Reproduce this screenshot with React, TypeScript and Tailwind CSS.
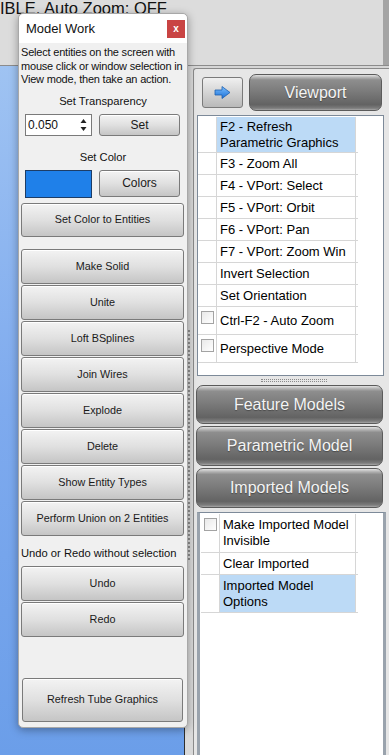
import React from "react";

const grayBtn =
  "flex items-center justify-center rounded-[3px] border border-[#7a7a7a] bg-gradient-to-b from-[#f3f3f3] via-[#e0e0e0] to-[#c5c5c5] text-[10.8px] text-[#1a1a1a] shadow-[inset_0_1px_0_#ffffff]";

const darkBtn =
  "flex items-center justify-center rounded-[7px] border border-[#5b5b5b] bg-[linear-gradient(to_bottom,#e2e2e2_0%,#b4b4b4_7%,#8e8e8e_14%,#7c7c7c_45%,#636363_85%,#7d7d7d_95%,#a8a8a8_100%)] text-[16px] text-[#f4f4f4] [text-shadow:0_1px_1px_rgba(0,0,0,0.35)]";

function Checkbox() {
  return (
    <div className="h-[13px] w-[13px] border border-[#a3a3a3] bg-gradient-to-br from-[#e9e9e9] to-[#ffffff]" />
  );
}

type Row = { text: string[]; h: number; sel?: boolean; check?: boolean };

function ListBox({ rows, first, textW }: { rows: Row[]; first: number; textW: number }) {
  return (
    <div className="flex flex-col pt-[1px]">
      {rows.map((r, i) => (
        <div key={i} className="flex border-b border-[#d6d6d6]" style={{ height: r.h, width: first + textW + 2 }}>
          <div className="flex shrink-0 justify-center border-r border-[#d6d6d6] pt-[4px]" style={{ width: first }}>
            {r.check ? <Checkbox /> : null}
          </div>
          <div
            className={`flex shrink-0 flex-col justify-center border-r border-[#d6d6d6] pl-[3px] text-[13px] leading-[16px] text-black ${
              r.sel ? "bg-[#bcdaf6]" : ""
            }`}
            style={{ width: textW }}
          >
            {r.text.map((t, j) => (
              <div key={j} className="whitespace-nowrap">
                {t}
              </div>
            ))}
          </div>
        </div>
      ))}
    </div>
  );
}

export default function App() {
  const rows1: Row[] = [
    { text: ["F2 - Refresh", "Parametric Graphics"], h: 36, sel: true },
    { text: ["F3 - Zoom All"], h: 22 },
    { text: ["F4 - VPort: Select"], h: 22 },
    { text: ["F5 - VPort: Orbit"], h: 22 },
    { text: ["F6 - VPort: Pan"], h: 22 },
    { text: ["F7 - VPort: Zoom Win"], h: 22 },
    { text: ["Invert Selection"], h: 22 },
    { text: ["Set Orientation"], h: 22 },
    { text: ["Ctrl-F2 - Auto Zoom"], h: 28, check: true },
    { text: ["Perspective Mode"], h: 28, check: true },
  ];
  const rows2: Row[] = [
    { text: ["Make Imported Model", "Invisible"], h: 39, check: true },
    { text: ["Clear Imported"], h: 22 },
    { text: ["Imported Model", "Options"], h: 38, sel: true },
  ];
  const actions = [
    "Make Solid",
    "Unite",
    "Loft BSplines",
    "Join Wires",
    "Explode",
    "Delete",
    "Show Entity Types",
    "Perform Union on 2 Entities",
  ];

  return (
    <div className="relative h-[755px] w-[389px] overflow-hidden bg-[#d6d6d6] font-['Liberation_Sans',Arial,sans-serif]">
      {/* top status bar */}
      <div className="flex h-[66px] border-b border-[#8c8c8c]">
        <div className="flex-1 bg-[#dcdcdc] text-[16.5px] leading-none text-[#111]">IBLE, Auto Zoom: OFF</div>
        <div className="w-[6px] bg-[#a4a4a4]" />
      </div>

      <div className="flex h-[689px]">
        {/* viewport */}
        <div className="w-[185px] border-r border-[#2e2e2e] bg-gradient-to-b from-[#9fc3f2] via-[#7eaaee] to-[#6b9ee9]" />
        {/* splitter */}
        <div className="flex w-[8px] justify-center bg-[#d9d9d9] pt-[264px]">
          <div className="h-[230px] w-[2px] border-l-2 border-dotted border-[#8e8e8e]" />
        </div>
        {/* right panel */}
        <div className="mt-[2px] flex flex-1 flex-col rounded-tl-[3px] border-l border-t border-[#8a8a8a] bg-[#e6e6e6] pt-[5px]">
          <div className="flex h-[37px] items-center">
            <div className="ml-[8px] flex h-[31px] w-[41px] items-center justify-center rounded-[3px] border border-[#7a7a7a] bg-gradient-to-b from-[#f0f0f0] to-[#b9b9b9]">
              <svg width="17" height="13" viewBox="0 0 17 13">
                <defs>
                  <linearGradient id="ar" x1="0" y1="0" x2="0" y2="1">
                    <stop offset="0" stopColor="#7cc0ff" />
                    <stop offset="1" stopColor="#1b6fd6" />
                  </linearGradient>
                </defs>
                <polygon points="1,4 8,4 8,0.5 16,6.5 8,12.5 8,9 1,9" fill="url(#ar)" stroke="#1f5fae" strokeWidth="0.8" />
              </svg>
            </div>
            <div className={`${darkBtn} ml-[6px] h-[37px] w-[133px]`}>Viewport</div>
          </div>

          <div className="ml-[3px] mt-[4px] h-[261px] w-[187px] border border-[#7d8a99] bg-white">
            <ListBox rows={rows1} first={19} textW={139} />
          </div>

          <div className="flex h-[9px] flex-col items-center justify-center gap-[1px] pl-[4px]">
            <div className="w-[66px] border-t border-dotted border-[#8a8a8a]" />
            <div className="w-[66px] border-t border-dotted border-[#8a8a8a]" />
          </div>

          <div className={`${darkBtn} ml-[2px] h-[39px] w-[187px]`}>Feature Models</div>
          <div className={`${darkBtn} ml-[2px] mt-[2px] h-[40px] w-[187px]`}>Parametric Model</div>
          <div className={`${darkBtn} ml-[2px] mt-[2px] h-[40px] w-[187px]`}>Imported Models</div>

          <div className="ml-[3px] mt-[4px] w-[189px] flex-1 border-x-[3px] border-t border-x-[#9aa3ad] border-t-[#7d8a99] bg-white pl-[1px]">
            <ListBox rows={rows2} first={19} textW={136} />
          </div>
        </div>
      </div>

      {/* floating window */}
      <div className="absolute left-[18px] top-[13px] flex h-[715px] w-[170px] flex-col rounded-[5px] border border-[#a8a8a8] bg-[#f0f0f0] shadow-[0_2px_8px_rgba(0,0,0,0.35)]">
        <div className="relative flex h-[29px] items-center rounded-t-[5px] bg-white pl-[7px] text-[13px] text-[#111]">
          Model Work
          <div className="absolute right-[2px] top-[6px] flex h-[18px] w-[18px] items-center justify-center bg-[#c94443] text-[10px] font-bold leading-none text-white">
            x
          </div>
        </div>
        <div className="flex flex-1 flex-col px-[2px]">
          <div className="mt-[3px] whitespace-nowrap text-[11px] leading-[13.5px] tracking-[-0.2px] text-[#111]">
            <div>Select entities on the screen with</div>
            <div>mouse click or window selection in</div>
            <div>View mode, then take an action.</div>
          </div>
          <div className="mt-[8px] text-center text-[11.2px] leading-[13px] text-[#111]">Set Transparency</div>
          <div className="mt-[6px] flex items-center">
            <div className="ml-[4px] flex h-[22px] w-[67px] items-center justify-between border border-[#7a7a7a] bg-white pl-[2px] pr-[4px] text-[12px] text-[#111]">
              <span>0.050</span>
              <svg width="7" height="16" viewBox="0 0 7 16">
                <polygon points="3.5,2 6.5,6 0.5,6" fill="#222" />
                <polygon points="0.5,10 6.5,10 3.5,14" fill="#222" />
              </svg>
            </div>
            <div className={`${grayBtn} ml-[7px] h-[22px] w-[81px] text-[12px]`}>Set</div>
          </div>
          <div className="mt-[15px] text-center text-[11.2px] leading-[13px] text-[#111]">Set Color</div>
          <div className="mt-[6px] flex items-start">
            <div className="ml-[4px] h-[28px] w-[67px] border border-[#1d3d66] bg-[#1f80e9]" />
            <div className={`${grayBtn} ml-[7px] h-[27px] w-[81px] text-[12px]`}>Colors</div>
          </div>
          <div className={`${grayBtn} mt-[5px] h-[34px] w-[163px]`}>Set Color to Entities</div>
          <div className="mt-[12px] flex flex-col gap-[1px]">
            {actions.map((a) => (
              <div key={a} className={`${grayBtn} h-[35px] w-[163px]`}>
                {a}
              </div>
            ))}
          </div>
          <div className="mt-[11px] text-[11.2px] leading-[13px] text-[#111]">Undo or Redo without selection</div>
          <div className="mt-[6px] flex flex-col gap-[1px]">
            <div className={`${grayBtn} h-[35px] w-[163px]`}>Undo</div>
            <div className={`${grayBtn} h-[35px] w-[163px]`}>Redo</div>
          </div>
          <div className={`${grayBtn} ml-[1px] mt-[41px] h-[44px] w-[161px]`}>Refresh Tube Graphics</div>
        </div>
      </div>
    </div>
  );
}
